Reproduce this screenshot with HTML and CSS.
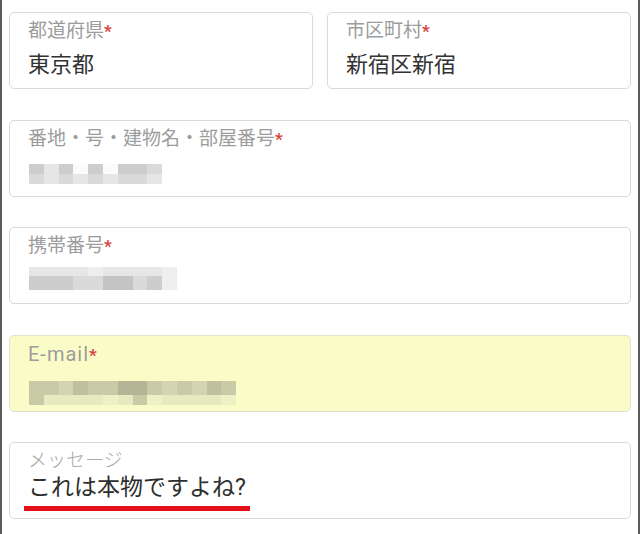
FILE: index.html
```html
<!DOCTYPE html>
<html lang="ja">
<head>
<meta charset="utf-8">
<link rel="stylesheet" href="styles.css">
</head>
<body>
<div class="page">
  <div class="row">
    <div class="field">
      <div class="label">都道府県<span class="req">*</span></div>
      <div class="value">東京都</div>
    </div>
    <div class="field">
      <div class="label">市区町村<span class="req">*</span></div>
      <div class="value">新宿区新宿</div>
    </div>
  </div>
  <div class="field">
    <div class="label">番地・号・建物名・部屋番号<span class="req">*</span></div>
    <div class="blur">
      <div class="brow">
        <i class="g2"></i><i class="g4"></i><i class="g2"></i><i class="g0"></i><i class="g2"></i><i class="g0"></i><i class="g2"></i><i class="g2"></i><i class="g3"></i>
      </div>
      <div class="brow">
        <i class="g3"></i><i class="g4"></i><i class="g3"></i><i class="g4"></i><i class="g3"></i><i class="g4"></i><i class="g3"></i><i class="g3"></i><i class="g4"></i>
      </div>
    </div>
  </div>
  <div class="field">
    <div class="label">携帯番号<span class="req">*</span></div>
    <div class="blur phone">
      <div class="brow short">
        <i class="g4"></i><i class="g4"></i><i class="g4"></i><i class="g4"></i><i class="g5"></i><i class="g4"></i><i class="g4"></i><i class="g4"></i><i class="g4"></i><i class="g5"></i>
      </div>
      <div class="brow tall">
        <i class="g2"></i><i class="g2"></i><i class="g2"></i><i class="g3"></i><i class="g3"></i><i class="g1"></i><i class="g1"></i><i class="g3"></i><i class="g2"></i><i class="g5"></i>
      </div>
    </div>
  </div>
  <div class="field yellow">
    <div class="label"><span class="latin">E-mail</span><span class="req">*</span></div>
    <div class="blur email">
      <div class="brow tall">
        <i class="y2"></i><i class="y2"></i><i class="y3"></i><i class="y1"></i><i class="y2"></i><i class="y2"></i><i class="y0"></i><i class="y0"></i><i class="y2"></i><i class="y3"></i><i class="y2"></i><i class="y3"></i><i class="y1"></i><i class="y2"></i>
      </div>
      <div class="brow">
        <i class="y2"></i><i class="y4"></i><i class="y4"></i><i class="y4"></i><i class="y4"></i><i class="y5"></i><i class="y4"></i><i class="y2"></i><i class="y5"></i><i class="y4"></i><i class="y4"></i><i class="y4"></i><i class="y4"></i><i class="y5"></i>
      </div>
    </div>
  </div>
  <div class="field">
    <div class="label light">メッセージ</div>
    <div class="value message">これは本物ですよね?</div>
    <div class="underline"></div>
  </div>
</div>
</body>
</html>
```

FILE: styles.css
```css
html, body {
  margin: 0;
  padding: 0;
  background: #fff;
}
body {
  font-family: Roboto, "Noto Sans CJK JP", sans-serif;
}
.page {
  width: 640px;
  height: 534px;
  box-sizing: border-box;
  border-left: 2px solid #5a5a5a;
  border-right: 2px solid #5a5a5a;
  padding: 12px 7px 0 7px;
  display: flex;
  flex-direction: column;
  gap: 30.5px;
  overflow: hidden;
}
.row {
  display: flex;
  gap: 14px;
}
.row .field {
  flex: 1;
}
.field {
  height: 77px;
  flex-shrink: 0;
  box-sizing: border-box;
  border: 1.5px solid #dadada;
  border-radius: 5px;
  padding: 6px 18px 0 18px;
  display: flex;
  flex-direction: column;
  background: #fff;
}
.field.yellow {
  background: #fafcc8;
  border-color: #e1e2cc;
}
.label {
  font-size: 19px;
  line-height: 24px;
  color: #9c9c9c;
  white-space: nowrap;
}
.latin {
  font-size: 20px;
  letter-spacing: 1px;
}
.label.light {
  color: #a8a8a8;
  font-weight: 300;
  margin-top: 0;
}
.req {
  color: #d8443c;
  font-size: 17px;
  font-weight: 700;
}
.value {
  font-size: 22px;
  line-height: 30px;
  color: #333;
  margin-top: 7px;
  white-space: nowrap;
}
.value.message {
  font-size: 23px;
  margin-top: 0;
  color: #2e2e2e;
}
.underline {
  width: 226px;
  height: 5px;
  background: #e3101a;
  margin-left: -4px;
  margin-top: 3px;
}
.blur {
  margin-top: 13px;
  margin-left: 1px;
  display: flex;
  flex-direction: column;
}
.blur.phone {
  margin-top: 9px;
}
.blur.email {
  margin-top: 14px;
}
.brow {
  display: flex;
  height: 10px;
}
.brow.short { height: 9px; }
.brow.tall { height: 14px; }
.brow i {
  display: block;
  width: 14.8px;
  height: 100%;
}
.g0 { background: #fbfbfb; }
.g1 { background: #c4c4c4; }
.g2 { background: #cdcdcd; }
.g3 { background: #dadada; }
.g4 { background: #e6e6e6; }
.g5 { background: #eeeeee; }
.y0 { background: #b3b596; }
.y1 { background: #bfc19e; }
.y2 { background: #c9cba6; }
.y3 { background: #d3d5b0; }
.y4 { background: #e7e9bf; }
.y5 { background: #eef0c5; }
```
